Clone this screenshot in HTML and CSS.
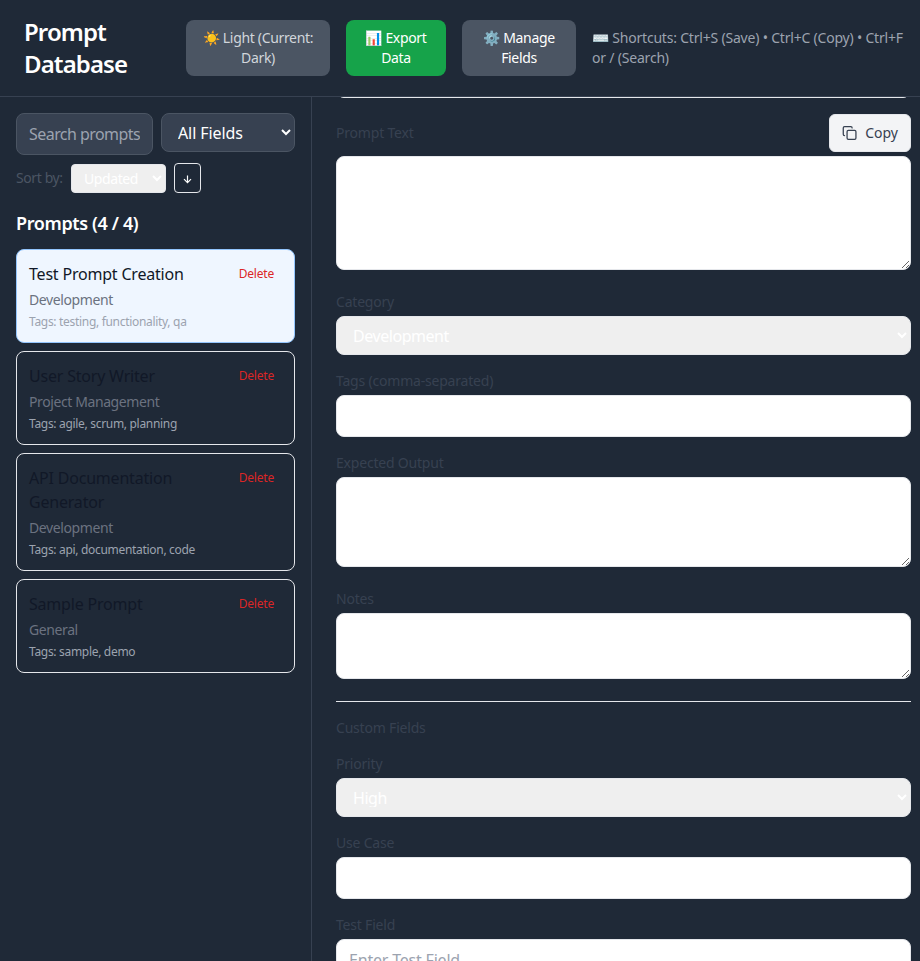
FILE: index.html
```html
<!DOCTYPE html>
<html lang="en">
<head>
<meta charset="utf-8">
<title>Prompt Database</title>
<link rel="stylesheet" href="styles.css">
</head>
<body>
<div class="app">
  <header class="header">
    <h1 class="title">Prompt Database</h1>
    <button class="btn theme">☀️ Light (Current:<br>Dark)</button>
    <button class="btn export">📊 Export<br>Data</button>
    <button class="btn manage">⚙️ Manage<br>Fields</button>
    <div class="shortcuts">⌨️ Shortcuts: Ctrl+S (Save) • Ctrl+C (Copy) • Ctrl+F<br>or / (Search)</div>
  </header>
  <div class="body">
    <aside class="sidebar">
      <div class="search-row">
        <input class="search" placeholder="Search prompts...">
        <select class="scope"><option>All Fields</option></select>
      </div>
      <div class="sort-row">
        <span class="sort-label">Sort by:</span>
        <select class="sort"><option>Updated</option></select>
        <button class="direction" aria-label="Descending"><svg width="9" height="9" viewBox="0 0 9 9" fill="none" stroke="currentColor" stroke-width="1.2"><path d="M4.500 0.500V7.500M1 4.200L4.500 7.700L8 4.200"/></svg></button>
      </div>
      <h2 class="list-title">Prompts (4 / 4)</h2>
      <div class="list">
        <article class="card selected">
          <div class="info"><h3>Test Prompt Creation</h3><p class="category">Development</p><p class="tags">Tags: testing, functionality, qa</p></div>
          <button class="delete">Delete</button>
        </article>
        <article class="card">
          <div class="info"><h3>User Story Writer</h3><p class="category">Project Management</p><p class="tags">Tags: agile, scrum, planning</p></div>
          <button class="delete">Delete</button>
        </article>
        <article class="card">
          <div class="info"><h3>API Documentation<br>Generator</h3><p class="category">Development</p><p class="tags">Tags: api, documentation, code</p></div>
          <button class="delete">Delete</button>
        </article>
        <article class="card">
          <div class="info"><h3>Sample Prompt</h3><p class="category">General</p><p class="tags">Tags: sample, demo</p></div>
          <button class="delete">Delete</button>
        </article>
      </div>
    </aside>
    <main class="main">
      <input class="field name">
      <div class="group">
        <div class="label-row">
          <label>Prompt Text</label>
          <button class="copy">
            <svg width="16" height="16" viewBox="0 0 24 24" fill="none" stroke="currentColor" stroke-width="2" stroke-linecap="round" stroke-linejoin="round"><rect x="8" y="8" width="14" height="14" rx="2"/><path d="M4 16c-1.1 0-2-.9-2-2V4c0-1.1.9-2 2-2h10c1.1 0 2 .9 2 2"/></svg>
            <span>Copy</span>
          </button>
        </div>
        <textarea class="field" rows="4"></textarea>
      </div>
      <div class="group"><label>Category</label><select class="field"><option>Development</option></select></div>
      <div class="group"><label>Tags (comma-separated)</label><input class="field"></div>
      <div class="group"><label>Expected Output</label><textarea class="field" rows="3"></textarea></div>
      <div class="group"><label>Notes</label><textarea class="field" rows="2"></textarea></div>
      <section class="custom">
        <h3 class="custom-title">Custom Fields</h3>
        <div class="group"><label>Priority</label><select class="field"><option>High</option></select></div>
        <div class="group"><label>Use Case</label><input class="field"></div>
        <div class="group"><label>Test Field</label><input class="field" placeholder="Enter Test Field"></div>
      </section>
    </main>
  </div>
</div>
</body>
</html>
```
FILE: styles.css
```css
* { box-sizing: border-box; margin: 0; padding: 0; }
body { font-family: "Noto Sans", sans-serif; font-size: 16px; line-height: 24px; background: #1f2937; color: #fff; }
button, input, select, textarea { font: inherit; color: inherit; letter-spacing: inherit; }
.app { height: 961px; display: flex; flex-direction: column; overflow: hidden; }
.header { flex: none; height: 97px; display: flex; align-items: center; gap: 16px; padding-left: 24px; border-bottom: 1px solid #374151; }
.title { flex: none; width: 146px; font-size: 24px; line-height: 32px; font-weight: 600; letter-spacing: -0.9px; }
.btn { flex: none; height: 56px; border: 0; border-radius: 8px; font-size: 14px; line-height: 20px; background: #4b5563; white-space: nowrap; letter-spacing: -0.33px; }
.theme { width: 144px; color: #d1d5db; }
.export { width: 100px; background: #16a34a; }
.manage { width: 114px; }
.shortcuts { font-size: 14px; line-height: 20px; color: #9ca3af; white-space: nowrap; letter-spacing: -0.2px; }
.body { flex: 1; min-height: 0; display: flex; }
.sidebar { flex: none; width: 312px; padding: 16px; border-right: 1px solid #374151; }
.search-row { display: flex; align-items: flex-start; gap: 8px; }
.search { width: 137px; height: 42px; padding: 8px 12px; border: 1px solid #4b5563; border-radius: 8px; background: #374151; letter-spacing: -0.55px; }
.search::placeholder, .field::placeholder { color: #9ca3af; opacity: 1; }
.scope { width: 134px; height: 39px; padding: 7px 12px 9px; border: 1px solid #4b5563; border-radius: 8px; background: #374151; letter-spacing: -0.1px; }
.sort-row { display: flex; align-items: center; gap: 8px; margin-top: 8px; height: 30px; font-size: 14px; line-height: 20px; letter-spacing: -0.4px; }
.sort-label { width: 47px; color: #4b5563; white-space: nowrap; }
.sort { width: 95px; height: 29px; padding: 3px 8px 5px; border: 1px solid #e5e7eb; border-radius: 4px; background: #efefef; }
.direction { display: flex; align-items: center; justify-content: center; width: 27px; height: 30px; padding-top: 2px; border: 1px solid #e5e7eb; border-radius: 4px; background: transparent; }
.list-title { margin-top: 16px; font-size: 18px; line-height: 28px; font-weight: 600; letter-spacing: -0.37px; }
.list { display: flex; flex-direction: column; gap: 8px; margin-top: 12px; }
.card { display: flex; justify-content: space-between; align-items: flex-start; padding: 12px; border: 1px solid #e5e7eb; border-radius: 8px; }
.card.selected { background: #eff6ff; border-color: #93c5fd; }
.card h3 { font-size: 16px; line-height: 24px; font-weight: 400; color: #111827; letter-spacing: -0.2px; }
.category { margin-top: 4px; font-size: 14px; line-height: 20px; color: #6b7280; letter-spacing: -0.4px; }
.tags { margin-top: 4px; font-size: 12px; line-height: 16px; color: #9ca3af; letter-spacing: -0.31px; }
.delete { padding: 4px 8px; border: 0; background: none; font-size: 12px; line-height: 16px; color: #dc2626; letter-spacing: -0.2px; }
.main { flex: 1; min-width: 0; overflow: hidden; padding: 0 9px 0 24px; }
.field { display: block; width: 100%; padding: 8px 12px; border: 1px solid #e5e7eb; border-radius: 8px; background: #fff; letter-spacing: -0.2px; }
input.field { height: 42px; }
select.field { height: 39px; padding: 7px 12px 9px; background: #efefef; letter-spacing: -0.45px; }
textarea.field { resize: vertical; }
.name { margin-top: -41px; margin-bottom: 16px; }
.group { margin-bottom: 16px; }
.group:has(textarea) { margin-bottom: 22px; }
.group label, .custom-title { display: block; margin-bottom: 4px; font-size: 14px; line-height: 20px; font-weight: 400; color: #374151; letter-spacing: -0.2px; }
.label-row { display: flex; align-items: center; justify-content: space-between; margin-bottom: 4px; }
.group .label-row label { margin: 0; }
.copy { display: flex; align-items: center; gap: 8px; width: 82px; height: 38px; padding: 0 12px; border: 1px solid #e5e7eb; border-radius: 6px; background: #f3f4f6; color: #374151; font-size: 14px; line-height: 20px; }
.custom { padding-top: 16px; border-top: 1px solid #e5e7eb; }
.custom .custom-title { margin-bottom: 16px; }
```
